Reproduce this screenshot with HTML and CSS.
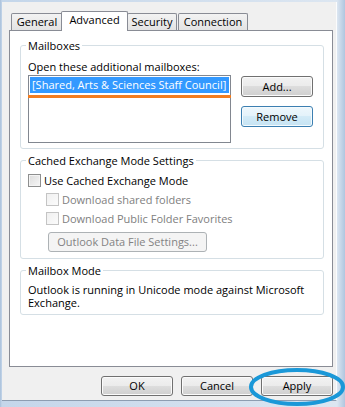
FILE: index.html
```html
<!DOCTYPE html>
<html>
<head>
<meta charset="utf-8">
<title>Advanced</title>
<link rel="stylesheet" href="styles.css">
</head>
<body>
<div class="client">
  <div class="tabs">
    <div class="tab t-general">General</div>
    <div class="tab active t-advanced">Advanced</div>
    <div class="tab t-security">Security</div>
    <div class="tab t-connection">Connection</div>
  </div>
  <div class="panel">
    <section class="group g-mail">
      <div class="legend">Mailboxes</div>
      <div class="label">Open these additional mailboxes:</div>
      <div class="mail-row">
        <div class="listbox">
          <div class="item selected">[Shared, Arts &amp; Sciences Staff Council]</div>
          <div class="mark"></div>
        </div>
        <div class="side-buttons">
          <button class="btn add">Add...</button>
          <button class="btn default remove">Remove</button>
        </div>
      </div>
    </section>
    <section class="group g-cache">
      <div class="legend">Cached Exchange Mode Settings</div>
      <div class="check-row"><span class="box"></span><span>Use Cached Exchange Mode</span></div>
      <div class="check-row sub disabled"><span class="box"></span><span>Download shared folders</span></div>
      <div class="check-row sub disabled"><span class="box"></span><span>Download Public Folder Favorites</span></div>
      <button class="btn disabled-btn datafile">Outlook Data File Settings...</button>
    </section>
    <section class="group g-mode">
      <div class="legend">Mailbox Mode</div>
      <p class="mode-text">Outlook is running in Unicode mode against Microsoft Exchange.</p>
    </section>
  </div>
  <div class="footer">
    <button class="btn foot">OK</button>
    <button class="btn foot">Cancel</button>
    <span class="apply-wrap">
      <button class="btn foot">Apply</button>
      <svg class="ring" width="96" height="38" viewBox="0 0 96 38"><ellipse cx="48" cy="19" rx="46" ry="17" fill="none" stroke="#1a98d8" stroke-width="4"/></svg>
    </span>
  </div>
</div>
</body>
</html>
```
FILE: styles.css
```css
* { box-sizing: border-box; }
html, body { margin: 0; padding: 0; }
body {
  width: 345px;
  height: 407px;
  overflow: hidden;
  background: linear-gradient(to right, #a9c0da 0, #c4d6ea 2px, #dce6f1 337px, #b0c6df 345px);
  font-family: "Open Sans", "Noto Sans", sans-serif;
  font-size: 11px;
  color: #000;
}
.client {
  margin: 2px 0 0 2px;
  width: 335px;
  height: 399px;
  background: #f0f0f0;
  padding: 9px 3px 0 7px;
  border-right: 1px solid #fbfcfd;
  border-bottom: 1px solid #8d9db1;
}
.tabs {
  display: flex;
  align-items: flex-end;
  height: 19px;
  padding-left: 2px;
}
.tab {
  height: 17px;
  border: 1px solid #898c95;
  border-bottom: none;
  border-radius: 2px 2px 0 0;
  background: linear-gradient(#f3f3f3, #e3e3e3);
  text-align: center;
  line-height: 16px;
  white-space: nowrap;
}
.t-general { width: 52px; }
.t-advanced { width: 67px; margin-left: -2px; }
.t-security { width: 50px; margin-left: -1px; }
.t-connection { width: 70px; margin-left: 1px; }
.tab.active {
  height: 20px;
  margin-bottom: -1px;
  background: #fff;
  position: relative;
  z-index: 2;
}
.panel {
  width: 324px;
  height: 337px;
  background: #fff;
  border: 1px solid #898c95;
  padding: 14px 9px 0 10px;
}
.group {
  width: 304px;
  border: 1px solid #d5dfe5;
  border-radius: 3px;
  padding: 0 7px;
}
.legend {
  width: max-content;
  margin: -8px 0 0 -2px;
  padding: 0 2px;
  background: #fff;
  line-height: 15px;
}
.g-mail { padding-bottom: 5px; }
.label { margin-top: 6px; line-height: 15px; }
.mail-row {
  display: flex;
  gap: 10px;
  margin-top: 1px;
}
.listbox {
  position: relative;
  width: 203px;
  height: 68px;
  border: 1px solid #828790;
  padding: 1px;
}
.item {
  height: 16px;
  line-height: 16px;
  padding-left: 2px;
  white-space: nowrap;
  overflow: hidden;
}
.item.selected { background: #3399ff; color: #fff; }
.mark {
  position: absolute;
  left: -1px;
  right: -1px;
  top: 19px;
  height: 3px;
  background: #f27d20;
}
.side-buttons {
  display: flex;
  flex-direction: column;
  gap: 9px;
  padding-top: 1px;
}
.btn {
  font: inherit;
  color: #000;
  height: 21px;
  padding: 0;
  border: 1px solid #707070;
  border-radius: 3px;
  background: linear-gradient(#f2f2f2 0%, #ebebeb 50%, #dddddd 50%, #cfcfcf 100%);
  box-shadow: inset 0 0 0 1px #fbfbfb;
  line-height: 17px;
  text-align: center;
}
.add, .remove { width: 72px; }
.btn.default {
  border-color: #3c7fb1;
  background: linear-gradient(#eef7fc 0%, #e3f2fa 50%, #d3ebf7 50%, #c5e3f3 100%);
  box-shadow: inset 0 0 0 1px #f4fafd;
}
.g-cache { margin-top: 11px; padding-bottom: 6px; }
.check-row {
  display: flex;
  align-items: center;
  gap: 3px;
  height: 19px;
  white-space: nowrap;
}
.check-row:first-of-type { margin-top: 3px; }
.legend + .check-row { margin-top: 3px; }
.check-row.sub { padding-left: 18px; }
.box {
  width: 13px;
  height: 13px;
  border: 1px solid #8e8f8f;
  background: linear-gradient(135deg, #dcdcdc, #f6f6f6);
  box-shadow: inset 0 0 0 1px #f4f4f4;
}
.check-row.disabled { color: #808080; }
.check-row.disabled .box {
  border-color: #c4c4c4;
  background: linear-gradient(135deg, #f0f0f0, #fbfbfb);
  box-shadow: none;
}
.datafile {
  display: block;
  margin: 4px 0 0 20px;
  width: 159px;
  height: 20px;
  color: #838383;
  border-color: #adb2b5;
  background: #f4f4f4;
  box-shadow: none;
  line-height: 16px;
}
.g-mode { margin-top: 11px; padding-bottom: 5px; }
.mode-text {
  margin: 5px 0 0 0;
  line-height: 13px;
}
.footer {
  display: flex;
  justify-content: flex-end;
  gap: 8px;
  margin-top: 9px;
}
.foot { width: 72px; height: 20px; line-height: 16px; }
.apply-wrap { position: relative; display: block; height: 20px; }
.ring {
  position: absolute;
  left: -12px;
  top: -8px;
  display: block;
}
```
